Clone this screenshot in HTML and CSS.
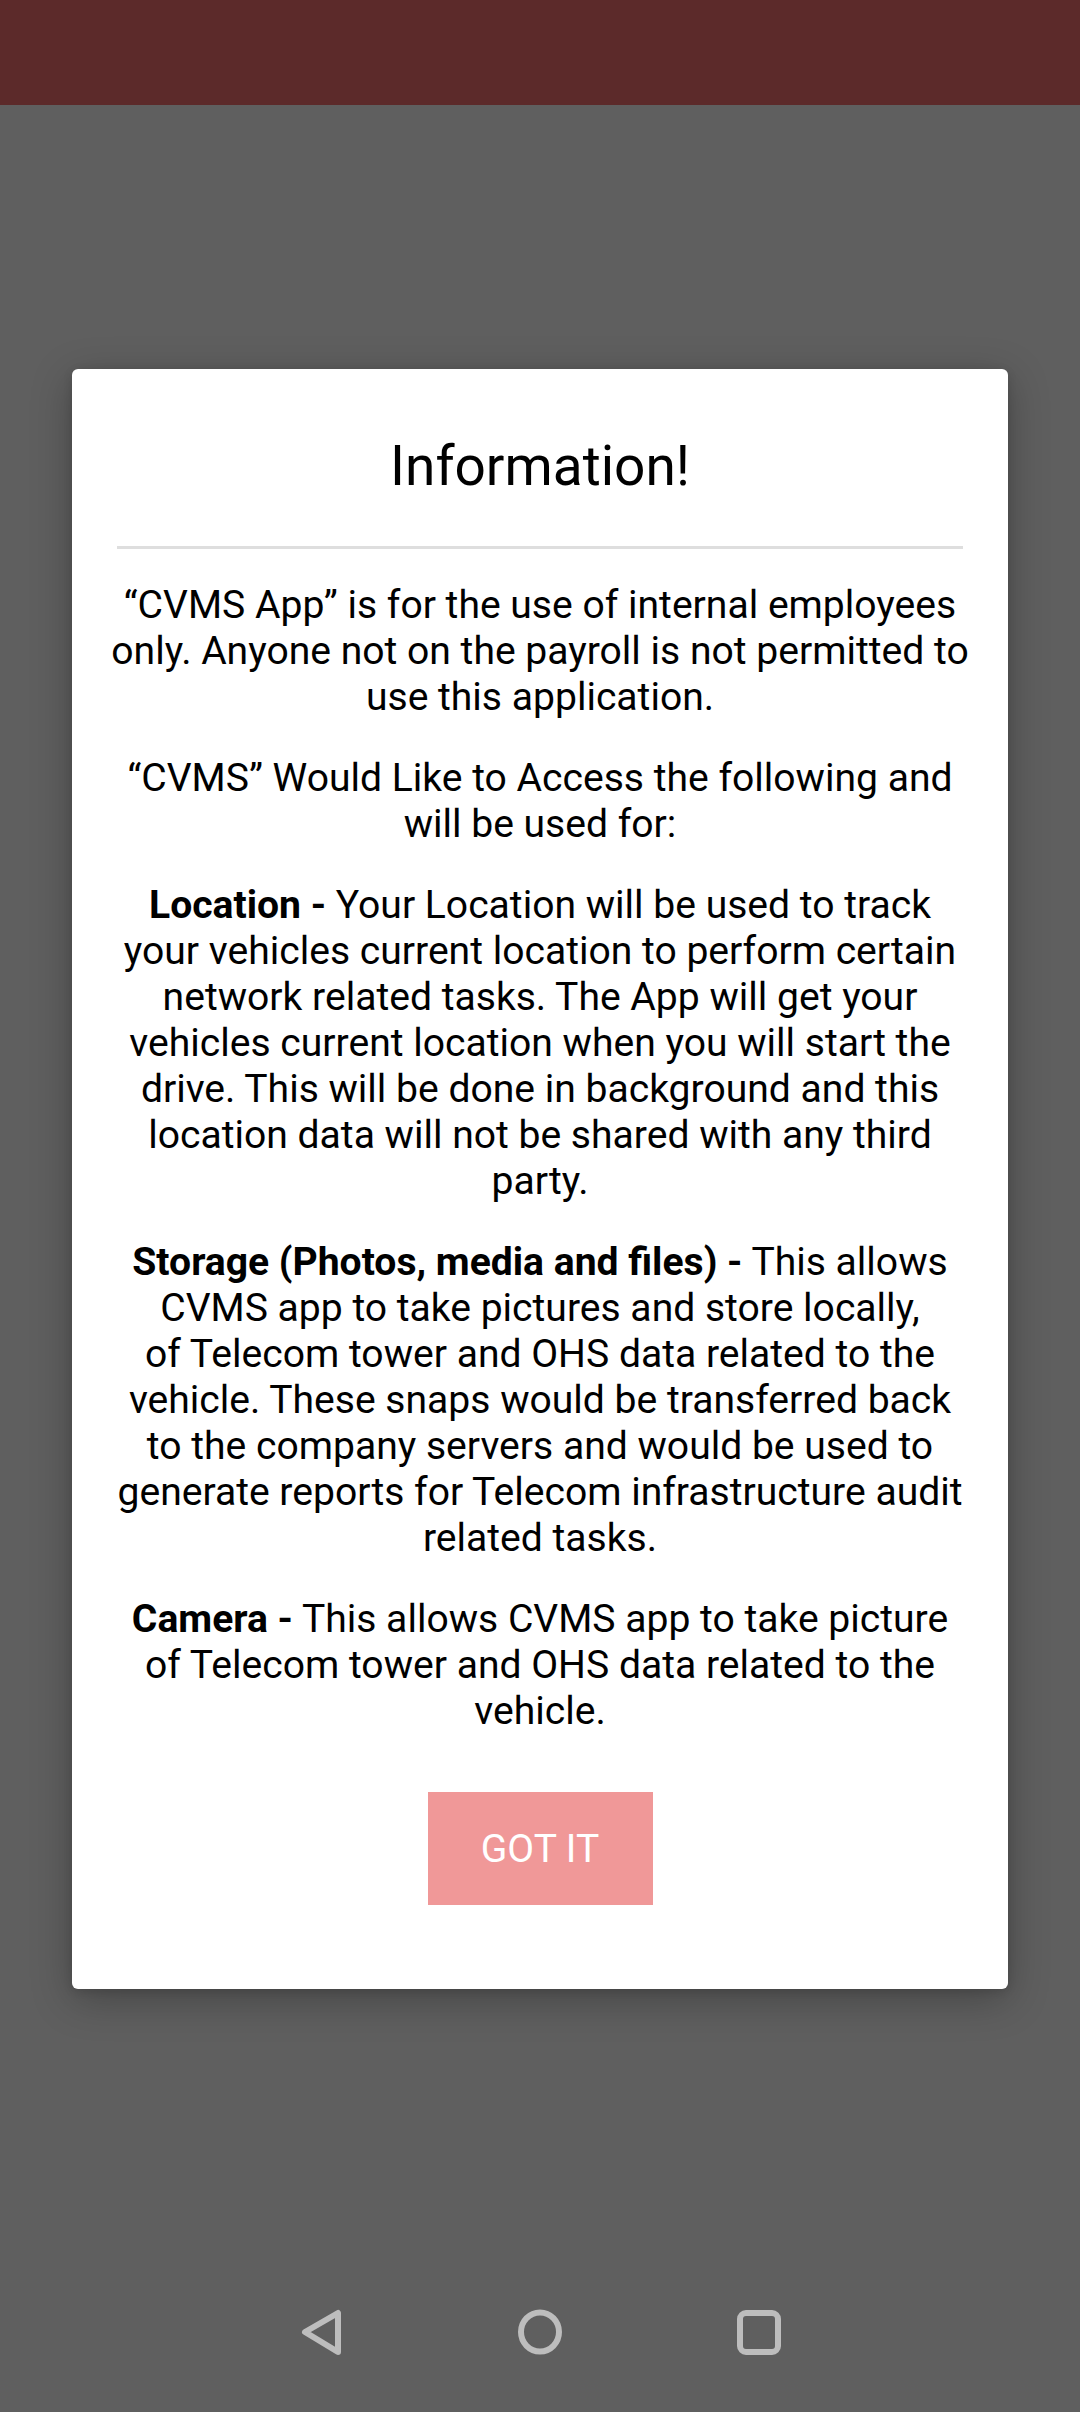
FILE: index.html
```html
<!DOCTYPE html>
<html lang="en">
<head>
<meta charset="utf-8">
<title>CVMS - Information</title>
<link rel="stylesheet" href="styles.css">
</head>
<body>
<div class="screen">
  <header class="appbar"></header>
  <main class="scrim">
    <section class="dialog">
      <h1 class="title">Information!</h1>
      <div class="divider"></div>
      <div class="content">
        <p>“CVMS App” is for the use of internal employees<br>only. Anyone not on the payroll is not permitted to<br>use this application.</p>
        <p>“CVMS” Would Like to Access the following and<br>will be used for:</p>
        <p><b>Location -</b> Your Location will be used to track<br>your vehicles current location to perform certain<br>network related tasks. The App will get your<br>vehicles current location when you will start the<br>drive. This will be done in background and this<br>location data will not be shared with any third<br>party.</p>
        <p><b>Storage (Photos, media and files) -</b> This allows<br>CVMS app to take pictures and store locally,<br>of Telecom tower and OHS data related to the<br>vehicle. These snaps would be transferred back<br>to the company servers and would be used to<br>generate reports for Telecom infrastructure audit<br>related tasks.</p>
        <p><b>Camera -</b> This allows CVMS app to take picture<br>of Telecom tower and OHS data related to the<br>vehicle.</p>
      </div>
      <button class="btn" type="button">Got it</button>
    </section>
  </main>
  <nav class="navbar">
    <svg class="nav-icon" viewBox="0 0 48 48" width="48" height="48"><polygon points="8,24 41,5 41,44" fill="none" stroke="#bdbdbd" stroke-width="6" stroke-linejoin="round"/></svg>
    <svg class="nav-icon" viewBox="0 0 48 48" width="48" height="48"><ellipse cx="24" cy="24" rx="19" ry="19.5" fill="none" stroke="#bdbdbd" stroke-width="6"/></svg>
    <svg class="nav-icon" viewBox="0 0 48 48" width="48" height="48"><rect x="5" y="5" width="38" height="39" rx="6" fill="none" stroke="#bdbdbd" stroke-width="6"/></svg>
  </nav>
</div>
</body>
</html>
```

FILE: styles.css
```css
* { box-sizing: border-box; }

html, body {
  margin: 0;
  padding: 0;
  background: #5f5f5f;
}

body {
  font-family: Roboto, "Noto Sans", "Liberation Sans", sans-serif;
  color: #000;
}

.screen {
  width: 1080px;
  height: 2412px;
  display: flex;
  flex-direction: column;
  overflow: hidden;
  background: #5f5f5f;
}

.appbar {
  height: 105px;
  flex: none;
  background: #5c2a2a;
}

.scrim {
  flex: 1;
  padding: 264px 72px 0;
}

.dialog {
  background: #fff;
  border-radius: 6px;
  box-shadow: 0 10px 40px rgba(0, 0, 0, 0.28), 0 2px 10px rgba(0, 0, 0, 0.12);
  padding: 65px 0 84px;
  display: flex;
  flex-direction: column;
  align-items: center;
}

.title {
  margin: 0;
  font-size: 55px;
  line-height: 64px;
  font-weight: 400;
  text-align: center;
}

.divider {
  align-self: stretch;
  height: 3px;
  margin: 48px 45px 0;
  background: #dedede;
}

.content {
  align-self: stretch;
  margin-top: 33px;
  padding: 0 24px;
  text-align: center;
  font-size: 39.1px;
  line-height: 46px;
}

.content p {
  margin: 0 0 35px;
}

.content p:last-child {
  margin-bottom: 0;
}

.content b {
  font-weight: 700;
}

.btn {
  margin-top: 58px;
  width: 225px;
  height: 113px;
  border: none;
  border-radius: 0;
  background: #f09898;
  color: #fff;
  font-family: Roboto, "Noto Sans", "Liberation Sans", sans-serif;
  font-size: 39px;
  font-weight: 400;
  text-transform: uppercase;
  display: flex;
  align-items: center;
  justify-content: center;
  padding: 0;
}

.navbar {
  margin-top: auto;
  height: 160px;
  flex: none;
  display: flex;
  justify-content: center;
  align-items: flex-start;
  padding-top: 56px;
  gap: 171px;
}

.nav-icon {
  display: block;
}
```
